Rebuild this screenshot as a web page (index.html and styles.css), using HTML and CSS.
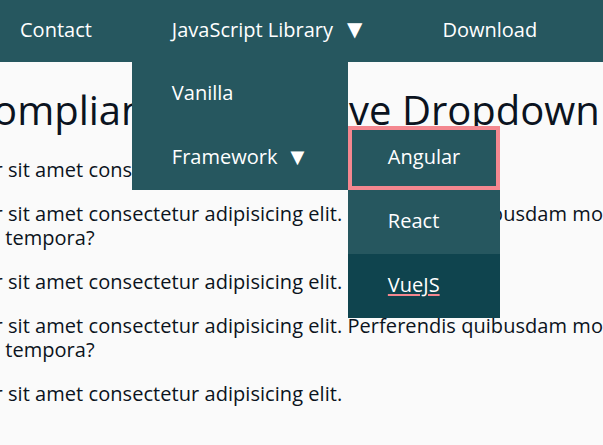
FILE: index.html
```html
<!DOCTYPE html>
<html lang="en">
<head>
<meta charset="utf-8">
<title>Accessible Dropdown</title>
<link rel="stylesheet" href="styles.css">
</head>
<body>
<header class="site-header">
  <nav class="nav" aria-label="Main">
    <ul class="menu">
      <li class="menu-item"><a class="menu-link" href="#">Contact</a></li>
      <li class="menu-item has-sub">
        <a class="menu-link" href="#" aria-expanded="true">JavaScript Library <span class="caret">▼</span></a>
        <ul class="dropdown">
          <li class="drop-item"><a class="drop-link" href="#">Vanilla</a></li>
          <li class="drop-item has-sub">
            <a class="drop-link" href="#" aria-expanded="true">Framework <span class="caret">▼</span></a>
            <ul class="submenu">
              <li class="sub-item"><a class="sub-link focused" href="#">Angular</a></li>
              <li class="sub-item"><a class="sub-link" href="#">React</a></li>
              <li class="sub-item"><a class="sub-link current" href="#">VueJS</a></li>
            </ul>
          </li>
        </ul>
      </li>
      <li class="menu-item"><a class="menu-link" href="#">Download</a></li>
    </ul>
  </nav>
</header>
<main class="content">
  <h1 class="title">WCAG Compliant, Responsive Dropdown</h1>
  <p>Lorem ipsum dolor sit amet consectetur adipisicing elit.</p>
  <p>Lorem ipsum dolor sit amet consectetur adipisicing elit. Perferendis quibusdam molestiae atque eveniet. Quisquam tempora?</p>
  <p>Lorem ipsum dolor sit amet consectetur adipisicing elit.</p>
  <p>Lorem ipsum dolor sit amet consectetur adipisicing elit. Perferendis quibusdam molestiae atque eveniet. Quisquam tempora?</p>
  <p>Lorem ipsum dolor sit amet consectetur adipisicing elit.</p>
</main>
</body>
</html>
```
FILE: styles.css
```css
html, body {
  margin: 0;
  padding: 0;
}
body {
  background: #fafafa;
  color: #0b1320;
  font-family: "Open Sans", "Noto Sans", sans-serif;
  font-size: 20px;
  overflow: hidden;
}
.site-header {
  background: #26575f;
  height: 62px;
  position: relative;
  z-index: 10;
}
.menu {
  list-style: none;
  margin: 0 0 0 -20px;
  padding: 0;
  display: flex;
  height: 62px;
}
.menu-item {
  position: relative;
}
.menu-link {
  display: flex;
  align-items: center;
  box-sizing: border-box;
  height: 62px;
  padding: 0 40px 4px;
  color: #fff;
  text-decoration: none;
  white-space: nowrap;
}
.caret {
  font-family: "DejaVu Sans", sans-serif;
  font-size: 20px;
  margin-left: 14px;
}
.dropdown, .submenu {
  list-style: none;
  margin: 0;
  padding: 0;
  position: absolute;
  background: #26575f;
}
.dropdown {
  top: 62px;
  left: 0;
  width: 216px;
}
.drop-item {
  position: relative;
}
.drop-link, .sub-link {
  display: flex;
  align-items: center;
  box-sizing: border-box;
  height: 64px;
  padding: 0 40px 3px;
  color: #fff;
  text-decoration: none;
  white-space: nowrap;
}
.drop-link .caret {
  font-size: 18px;
  margin-left: 13px;
}
.submenu {
  top: 0;
  left: 216px;
  width: 152px;
}
.sub-link.focused {
  outline: 4px solid #f4878f;
  outline-offset: -4px;
}
.sub-link.current {
  background: #0f444e;
  text-decoration: underline;
  text-decoration-color: #f4878f;
  text-decoration-thickness: 2px;
  text-underline-offset: 2px;
}
.content {
  margin-left: -176px;
  width: 1000px;
}
.title {
  font-size: 40px;
  font-weight: 400;
  margin: 24px 0 24px 17px;
  line-height: 48px;
  white-space: nowrap;
}
.content p {
  margin: 20px 0;
  line-height: 24px;
  letter-spacing: 0.05px;
  width: 960px;
}
```
